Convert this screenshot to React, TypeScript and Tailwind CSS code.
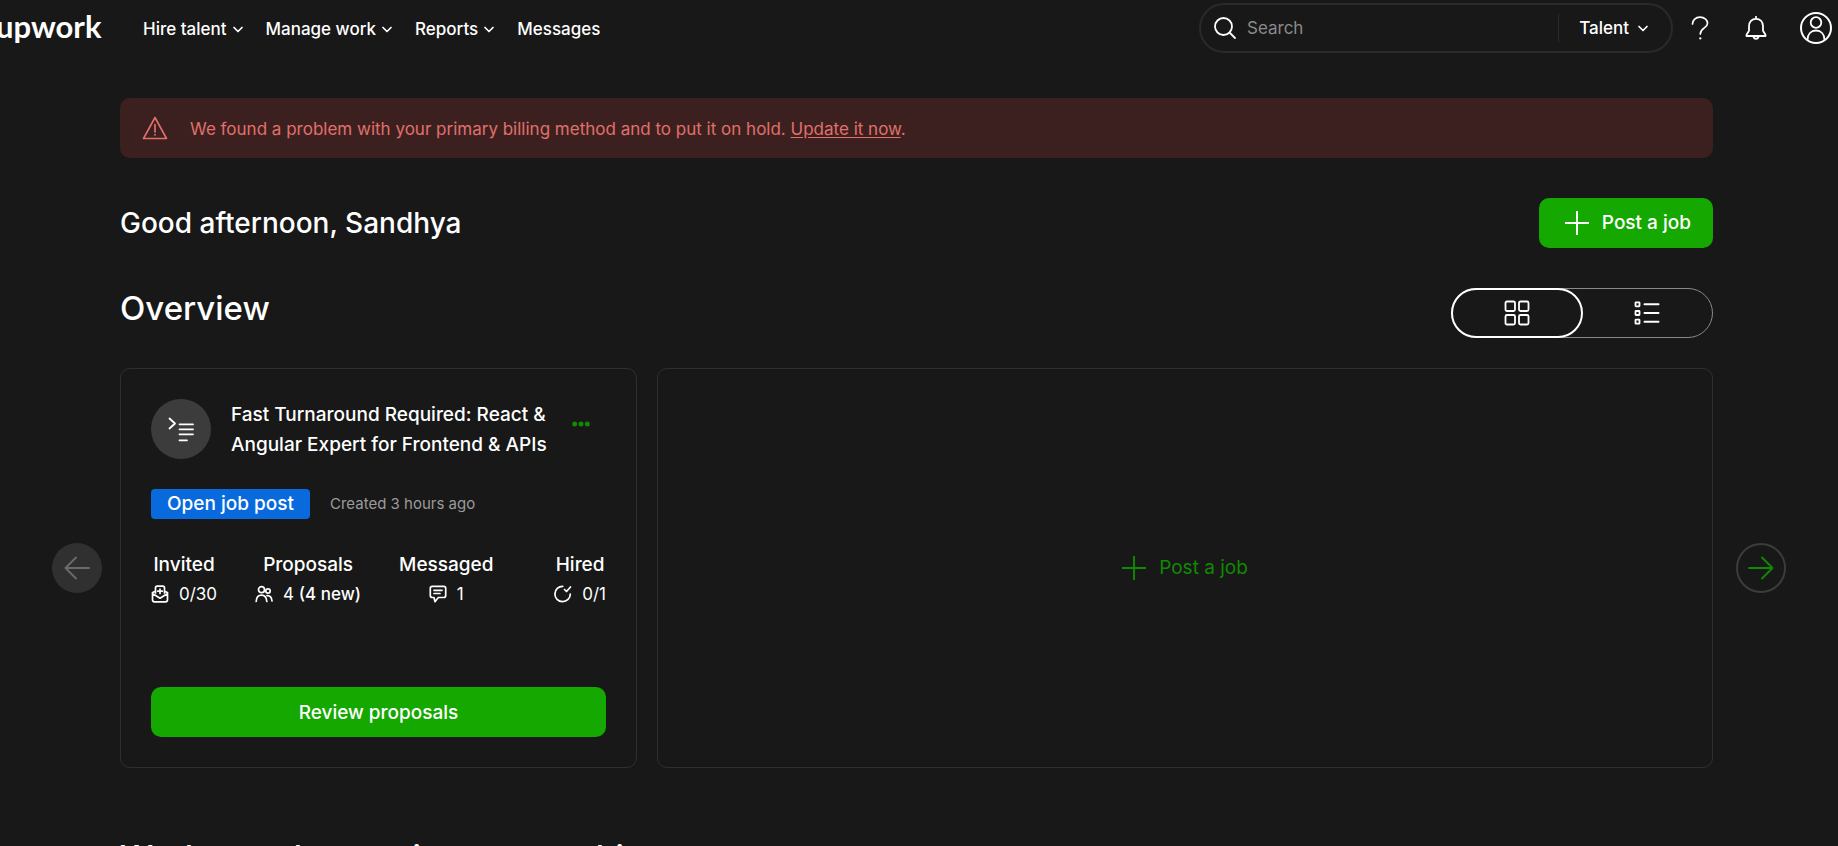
import React from "react";

type IconProps = { className?: string; children: React.ReactNode; box?: string };

function Svg({ className = "size-6", children, box = "0 0 24 24" }: IconProps) {
  return (
    <svg
      viewBox={box}
      className={`shrink-0 ${className}`}
      fill="none"
      stroke="currentColor"
      strokeWidth={1.5}
      strokeLinecap="round"
      strokeLinejoin="round"
      aria-hidden="true"
    >
      {children}
    </svg>
  );
}

const Chevron = () => (
  <Svg className="size-3" box="0 0 12 12">
    <path d="M2 3.500l4 4 4-4" strokeWidth={1.7} />
  </Svg>
);

const Plus = () => (
  <Svg className="size-6">
    <path d="M12 0v24M0 12h24" strokeWidth={1.9} strokeLinecap="butt" />
  </Svg>
);

function NavItem({ label }: { label: string }) {
  return (
    <button type="button" className="flex items-center gap-[5px]">
      {label}
      <Chevron />
    </button>
  );
}

function Header() {
  return (
    <header className="flex h-14 items-center pr-1.5 text-[17px] font-medium">
      <a href="#" className="-ml-1 w-[103px] pb-1 font-[family-name:Lato] text-[31px] leading-10 font-bold" aria-label="Upwork home">
        upwork
      </a>
      <nav className="ml-11 flex items-center gap-[22px] pt-1">
        <NavItem label="Hire talent" />
        <NavItem label="Manage work" />
        <NavItem label="Reports" />
        <a href="#">Messages</a>
      </nav>
      <div className="ml-auto flex h-[50px] w-[474px] items-center rounded-full border-2 border-[#2a2a2a] pl-3 pr-[22px]">
        <Svg className="size-6">
          <circle cx="10.500" cy="10.500" r="8.500" strokeWidth={1.8} />
          <path d="M17 17l5 5" strokeWidth={1.8} />
        </Svg>
        <input
          type="search"
          aria-label="Search"
          placeholder="Search"
          className="ml-2.5 min-w-0 flex-1 bg-transparent pt-0.5 font-normal outline-none placeholder:text-[#8a8a8a]"
        />
        <button type="button" className="flex items-center gap-2 border-l border-[#2a2a2a] pt-0.5 pl-5">
          Talent
          <Chevron />
        </button>
      </div>
      <div className="ml-[15px] flex items-center">
        <button type="button" aria-label="Help" className="mr-8 flex">
          <Svg className="size-6">
            <path d="M4.500 8C4.500 3.800 7.800 1.200 12 1.200S19.500 3.700 19.500 7.500C19.500 12 12.300 12 12.300 18" strokeWidth={1.700} />
            <path d="M12.300 22.300v.2" strokeWidth={2.200} />
          </Svg>
        </button>
        <button type="button" aria-label="Notifications" className="mr-8 flex">
          <Svg className="size-6">
            <path d="M12 .8v2M5 10.300C5 5.800 7.800 2.800 12 2.800s7 3 7 7.500v4.500l2.500 4v1.200h-19v-1.200l2.500-4z" strokeWidth={1.800} />
            <path d="M9.300 20.500c.3 1.500 1.200 2.400 2.700 2.400s2.400-.9 2.700-2.400z" />
          </Svg>
        </button>
        <button type="button" aria-label="Account" className="flex">
          <Svg className="size-8" box="0 0 32 32">
            <circle cx="16" cy="16" r="15" strokeWidth={2} />
            <circle cx="16" cy="10.500" r="5.300" strokeWidth={1.800} />
            <path d="M7.500 28c0-6 3.500-9.500 8.500-9.500s8.500 3.500 8.500 9.500" strokeWidth={1.800} />
          </Svg>
        </button>
      </div>
    </header>
  );
}

const icons = {
  invited: (
    <Svg className="size-[18px]" box="0 0 18 18">
      <path d="M4.500 8V3c0-1 .7-1.800 1.700-1.800h5.600c1 0 1.700.8 1.700 1.800v5" strokeWidth={1.700} />
      <path d="M4 6.500L1.500 7.500v7.300c0 1.200.8 2 2 2h11c1.200 0 2-.8 2-2V7.500L14 6.500M1.500 8.500L9 13.200l7.500-4.700" strokeWidth={1.700} />
      <path d="M9 4v4.500M6.800 6.200h4.400" strokeWidth={1.700} />
    </Svg>
  ),
  proposals: (
    <Svg className="size-[18px]" box="0 0 18 18">
      <circle cx="6.500" cy="4.700" r="3" strokeWidth={1.700} />
      <circle cx="13" cy="6" r="2.200" strokeWidth={1.700} />
      <path d="M1.200 16.500c.2-4 2-6.300 5.300-6.300s5 2.300 5.300 6.300M12 10.700c3-.5 4.800 1.800 5 5.300" strokeWidth={1.700} />
    </Svg>
  ),
  messaged: (
    <Svg className="size-[18px]" box="0 0 18 18">
      <path d="M3.300 1.300h11.400c1.100 0 2 .8 2 2v7.200c0 1.200-.9 2-2 2H9.300L6 16.700l-1-4.200H3.300c-1.100 0-2-.8-2-2V3.300c0-1.200.9-2 2-2z" strokeWidth={1.700} />
      <path d="M5 5.300h8M5 8.500h6" strokeWidth={1.700} />
    </Svg>
  ),
  hired: (
    <Svg className="size-[18px]" box="0 0 18 18">
      <path d="M8.800 1.300A7.700 7.700 0 1 0 16.300 9" strokeWidth={1.700} />
      <path d="M10.500 4.500l2 2 4-4.500" strokeWidth={1.700} />
    </Svg>
  ),
};

function Stat({ label, icon, className = "", children }: { label: string; icon: React.ReactNode; className?: string; children: React.ReactNode }) {
  return (
    <div className={`flex flex-col items-center ${className}`}>
      <dt className="text-[19px] leading-[30px] font-medium">{label}</dt>
      <dd className="flex items-center gap-2.5 text-[17px] leading-7">
        {icon}
        <span>{children}</span>
      </dd>
    </div>
  );
}

function JobCard() {
  return (
    <article className="flex w-[517px] shrink-0 flex-col rounded-[10px] border border-[#2f2f2f] px-[30px] pt-[29px] pb-[30px]">
      <div className="flex items-start">
        <span className="mt-px flex size-[60px] shrink-0 items-center justify-center rounded-full bg-[#3c3c3c]">
          <Svg className="size-[26px]" box="0 0 26 26">
            <path d="M1.500 2.500L7 7.500l-5.500 5" strokeWidth={1.800} />
            <path d="M11.500 8.300H25M11.500 13.300H25M11.500 18.300H25M11.500 24.300H19" strokeWidth={1.800} />
          </Svg>
        </span>
        <h3 className="ml-5 flex-1 pt-0.5 text-[19px] leading-[30px] font-medium">
          Fast Turnaround Required: React &amp;
          <br />
          Angular Expert for Frontend &amp; APIs
        </h3>
        <button type="button" aria-label="Job options" className="mt-3.5 mr-[13px] flex text-[#108a00]">
          <Svg className="size-6">
            <g fill="currentColor" stroke="none">
              <circle cx="5.700" cy="12" r="2.500" />
              <circle cx="12" cy="12" r="2.500" />
              <circle cx="18.300" cy="12" r="2.500" />
            </g>
          </Svg>
        </button>
      </div>
      <div className="mt-[29px] flex items-center gap-5">
        <span className="rounded bg-[#086add] px-4 text-[19px] leading-[30px] font-medium">Open job post</span>
        <span className="text-[15px] text-[#9b9b9b]">Created 3 hours ago</span>
      </div>
      <dl className="mt-[31px] flex gap-[38px]">
        <Stat label="Invited" icon={icons.invited}>0/30</Stat>
        <Stat label="Proposals" icon={icons.proposals}>
          4 <span className="font-medium">(4 new)</span>
        </Stat>
        <Stat label="Messaged" icon={icons.messaged}>1</Stat>
        <Stat label="Hired" icon={icons.hired} className="ml-auto">0/1</Stat>
      </dl>
      <button type="button" className="mt-auto h-[50px] rounded-[10px] bg-[#14a800] pt-0.5 text-[19px] font-medium">
        Review proposals
      </button>
    </article>
  );
}

export default function App() {
  return (
    <div className="h-screen overflow-y-auto bg-[#181818] font-[Inter,sans-serif] text-white [scrollbar-width:none]">
      <Header />
      <main className="mt-[42px]">
        <div className="pr-[125px] pl-[120px]">
          <div role="alert" className="flex h-[60px] items-center gap-[22px] rounded-[10px] bg-[#3c2020] pl-[22px] text-[17px] text-[#e0706a]">
            <Svg className="size-[26px]" box="0 0 26 26">
              <path d="M13 2.500L24.500 23.500h-23z" strokeWidth={1.600} />
              <path d="M13 9.500v7.500M13 19.700v.3" strokeWidth={1.700} />
            </Svg>
            <p className="pt-1">
              We found a problem with your primary billing method and to put it on hold.{" "}
              <a href="#" className="underline underline-offset-2">Update it now</a>.
            </p>
          </div>
          <div className="mt-10 flex items-center justify-between">
            <h1 className="text-[28px] leading-[50px] font-medium">Good afternoon, Sandhya</h1>
            <button type="button" className="flex h-[50px] items-center gap-[13px] rounded-[10px] bg-[#14a800] pr-[22px] pl-[26px] text-[19px] font-medium">
              <Plus />
              Post a job
            </button>
          </div>
          <div className="mt-10 flex items-start justify-between">
            <h2 className="text-[33px] leading-10 font-medium">Overview</h2>
            <div className="flex h-[50px] w-[262px] rounded-full border border-[#8a8a8a]">
              <button type="button" aria-label="Grid view" aria-pressed="true" className="-m-px flex w-[132px] items-center justify-center rounded-full border-2 border-white">
                <Svg className="size-[26px]" box="0 0 26 26">
                  <rect x="1.500" y="1.500" width="9.500" height="9.500" rx="1.500" strokeWidth={1.800} />
                  <rect x="15" y="1.500" width="9.500" height="9.500" rx="1.500" strokeWidth={1.800} />
                  <rect x="1.500" y="15" width="9.500" height="9.500" rx="1.500" strokeWidth={1.800} />
                  <rect x="15" y="15" width="9.500" height="9.500" rx="1.500" strokeWidth={1.800} />
                </Svg>
              </button>
              <button type="button" aria-label="List view" aria-pressed="false" className="flex flex-1 items-center justify-center">
                <Svg className="size-[26px]" box="0 0 26 26">
                  <rect x="1.500" y="2.300" width="4" height="4" rx=".5" strokeWidth={1.800} />
                  <rect x="1.500" y="11" width="4" height="4" rx=".5" strokeWidth={1.800} />
                  <rect x="1.500" y="19.700" width="4" height="4" rx=".5" strokeWidth={1.800} />
                  <path d="M10.500 4.300h14M10.500 13h14M10.500 21.700h14" strokeWidth={2} />
                </Svg>
              </button>
            </div>
          </div>
        </div>
        <section aria-label="Job posts" className="mt-[30px] flex h-[400px] items-stretch px-[52px]">
          <button type="button" disabled aria-label="Previous" className="mr-[18px] flex size-[50px] shrink-0 items-center justify-center self-center rounded-full bg-[#303030] text-[#6b6b6b]">
            <Svg className="size-[26px]" box="0 0 26 26">
              <path d="M25 13H1.500M12 2.500L1.500 13 12 23.500" strokeWidth={1.900} />
            </Svg>
          </button>
          <JobCard />
          <button type="button" className="ml-5 flex flex-1 items-center justify-center gap-[13px] rounded-[10px] border border-[#2f2f2f] text-[19px] text-[#108a00]">
            <Plus />
            Post a job
          </button>
          <button type="button" aria-label="Next" className="ml-[23px] flex size-[50px] shrink-0 items-center justify-center self-center rounded-full border-2 border-[#3c3c3c] text-[#108a00]">
            <Svg className="size-[26px]" box="0 0 26 26">
              <path d="M1 13h23.500M14 2.500L24.500 13 14 23.500" strokeWidth={1.900} />
            </Svg>
          </button>
        </section>
        <section className="pt-[69px] pb-10 pl-[120px]">
          <h2 className="text-[33px] leading-10 font-medium">Work together again on something new</h2>
        </section>
      </main>
    </div>
  );
}
